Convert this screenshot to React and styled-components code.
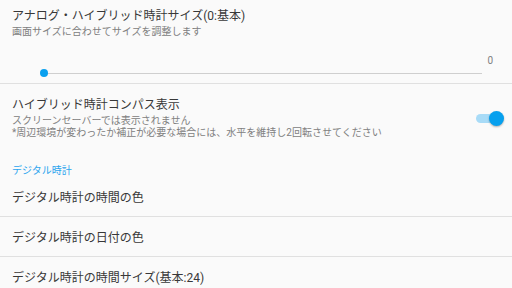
import React from "react";
import styled, { createGlobalStyle } from "styled-components";

const GlobalStyle = createGlobalStyle`
  html, body {
    margin: 0;
    padding: 0;
    background: #fafafa;
    overflow: hidden;
  }
  body {
    font-family: Roboto, "Noto Sans CJK JP", sans-serif;
  }
`;

const Screen = styled.div`
  width: 512px;
  height: 288px;
  background: #fafafa;
  overflow: hidden;
`;

const Pref = styled.div`
  display: flex;
  align-items: ${(p) => (p.$center ? "center" : "flex-start")};
  padding: ${(p) => p.$pad || "13px 12px 0 12px"};
  min-height: ${(p) => p.$minHeight || "auto"};
  box-sizing: border-box;
  border-bottom: ${(p) => (p.$divider ? "1px solid #e0e0e0" : "none")};
`;

const PrefText = styled.div`
  flex: 1;
  min-width: 0;
`;

const Title = styled.div`
  font-size: 12px;
  line-height: 16px;
  color: #383838;
  white-space: nowrap;
`;

const Summary = styled.div`
  margin-top: 2px;
  font-size: 10px;
  line-height: 12px;
  color: #808080;
  white-space: nowrap;
`;

const SliderGrid = styled.div`
  display: grid;
  grid-template-columns: 1fr 11px;
  grid-template-rows: 12px 12px;
  margin: 17px 0 4px 32px;
`;

const SliderValue = styled.div`
  grid-column: 2;
  grid-row: 1;
  font-size: 10px;
  line-height: 12px;
  color: #808080;
  text-align: right;
`;

const Track = styled.div`
  grid-column: 1;
  grid-row: 2;
  position: relative;
  align-self: center;
  height: 1px;
  background: #cfcfcf;
`;

const Thumb = styled.div`
  position: absolute;
  left: ${(p) => p.$pos}%;
  top: 50%;
  width: 8px;
  height: 8px;
  margin: -4px 0 0 -4px;
  border-radius: 50%;
  background: #0aa0ef;
`;

const Switch = styled.div`
  position: relative;
  width: 21px;
  height: 9px;
  margin-right: 15px;
  border-radius: 5px;
  background: #a8dbf7;
  flex-shrink: 0;
`;

const SwitchKnob = styled.div`
  position: absolute;
  right: -7px;
  top: 50%;
  width: 15px;
  height: 15px;
  margin-top: -7.5px;
  border-radius: 50%;
  background: #07a0ee;
  box-shadow: 0 1px 2px rgba(0, 0, 0, 0.3);
`;

const Category = styled.div`
  padding: 15px 12px 0;
  font-size: 10px;
  line-height: 12px;
  color: #2aa4ee;
`;

const Row = styled.div`
  display: flex;
  align-items: center;
  height: 40px;
  padding: 2px 12px 0;
  box-sizing: border-box;
  border-bottom: 1px solid #e0e0e0;
`;

function App() {
  return (
    <Screen>
      <GlobalStyle />
      <Pref $pad="8px 19px 0 12px" $divider>
        <PrefText>
          <Title>アナログ・ハイブリッド時計サイズ(0:基本)</Title>
          <Summary>画面サイズに合わせてサイズを調整します</Summary>
          <SliderGrid>
            <SliderValue>0</SliderValue>
            <Track>
              <Thumb $pos={0} />
            </Track>
          </SliderGrid>
        </PrefText>
      </Pref>
      <Pref $center $minHeight="66px" $pad="13px 0 11px 12px">
        <PrefText>
          <Title>ハイブリッド時計コンパス表示</Title>
          <Summary>
            スクリーンセーバーでは表示されません
            <br />
            *周辺環境が変わったか補正が必要な場合には、水平を維持し2回転させてください
          </Summary>
        </PrefText>
        <Switch>
          <SwitchKnob />
        </Switch>
      </Pref>
      <Category>デジタル時計</Category>
      <Row>
        <Title>デジタル時計の時間の色</Title>
      </Row>
      <Row>
        <Title>デジタル時計の日付の色</Title>
      </Row>
      <Pref>
        <PrefText>
          <Title>デジタル時計の時間サイズ(基本:24)</Title>
          <Summary>画面サイズに合わせてサイズを調整します</Summary>
        </PrefText>
      </Pref>
    </Screen>
  );
}

export default App;
